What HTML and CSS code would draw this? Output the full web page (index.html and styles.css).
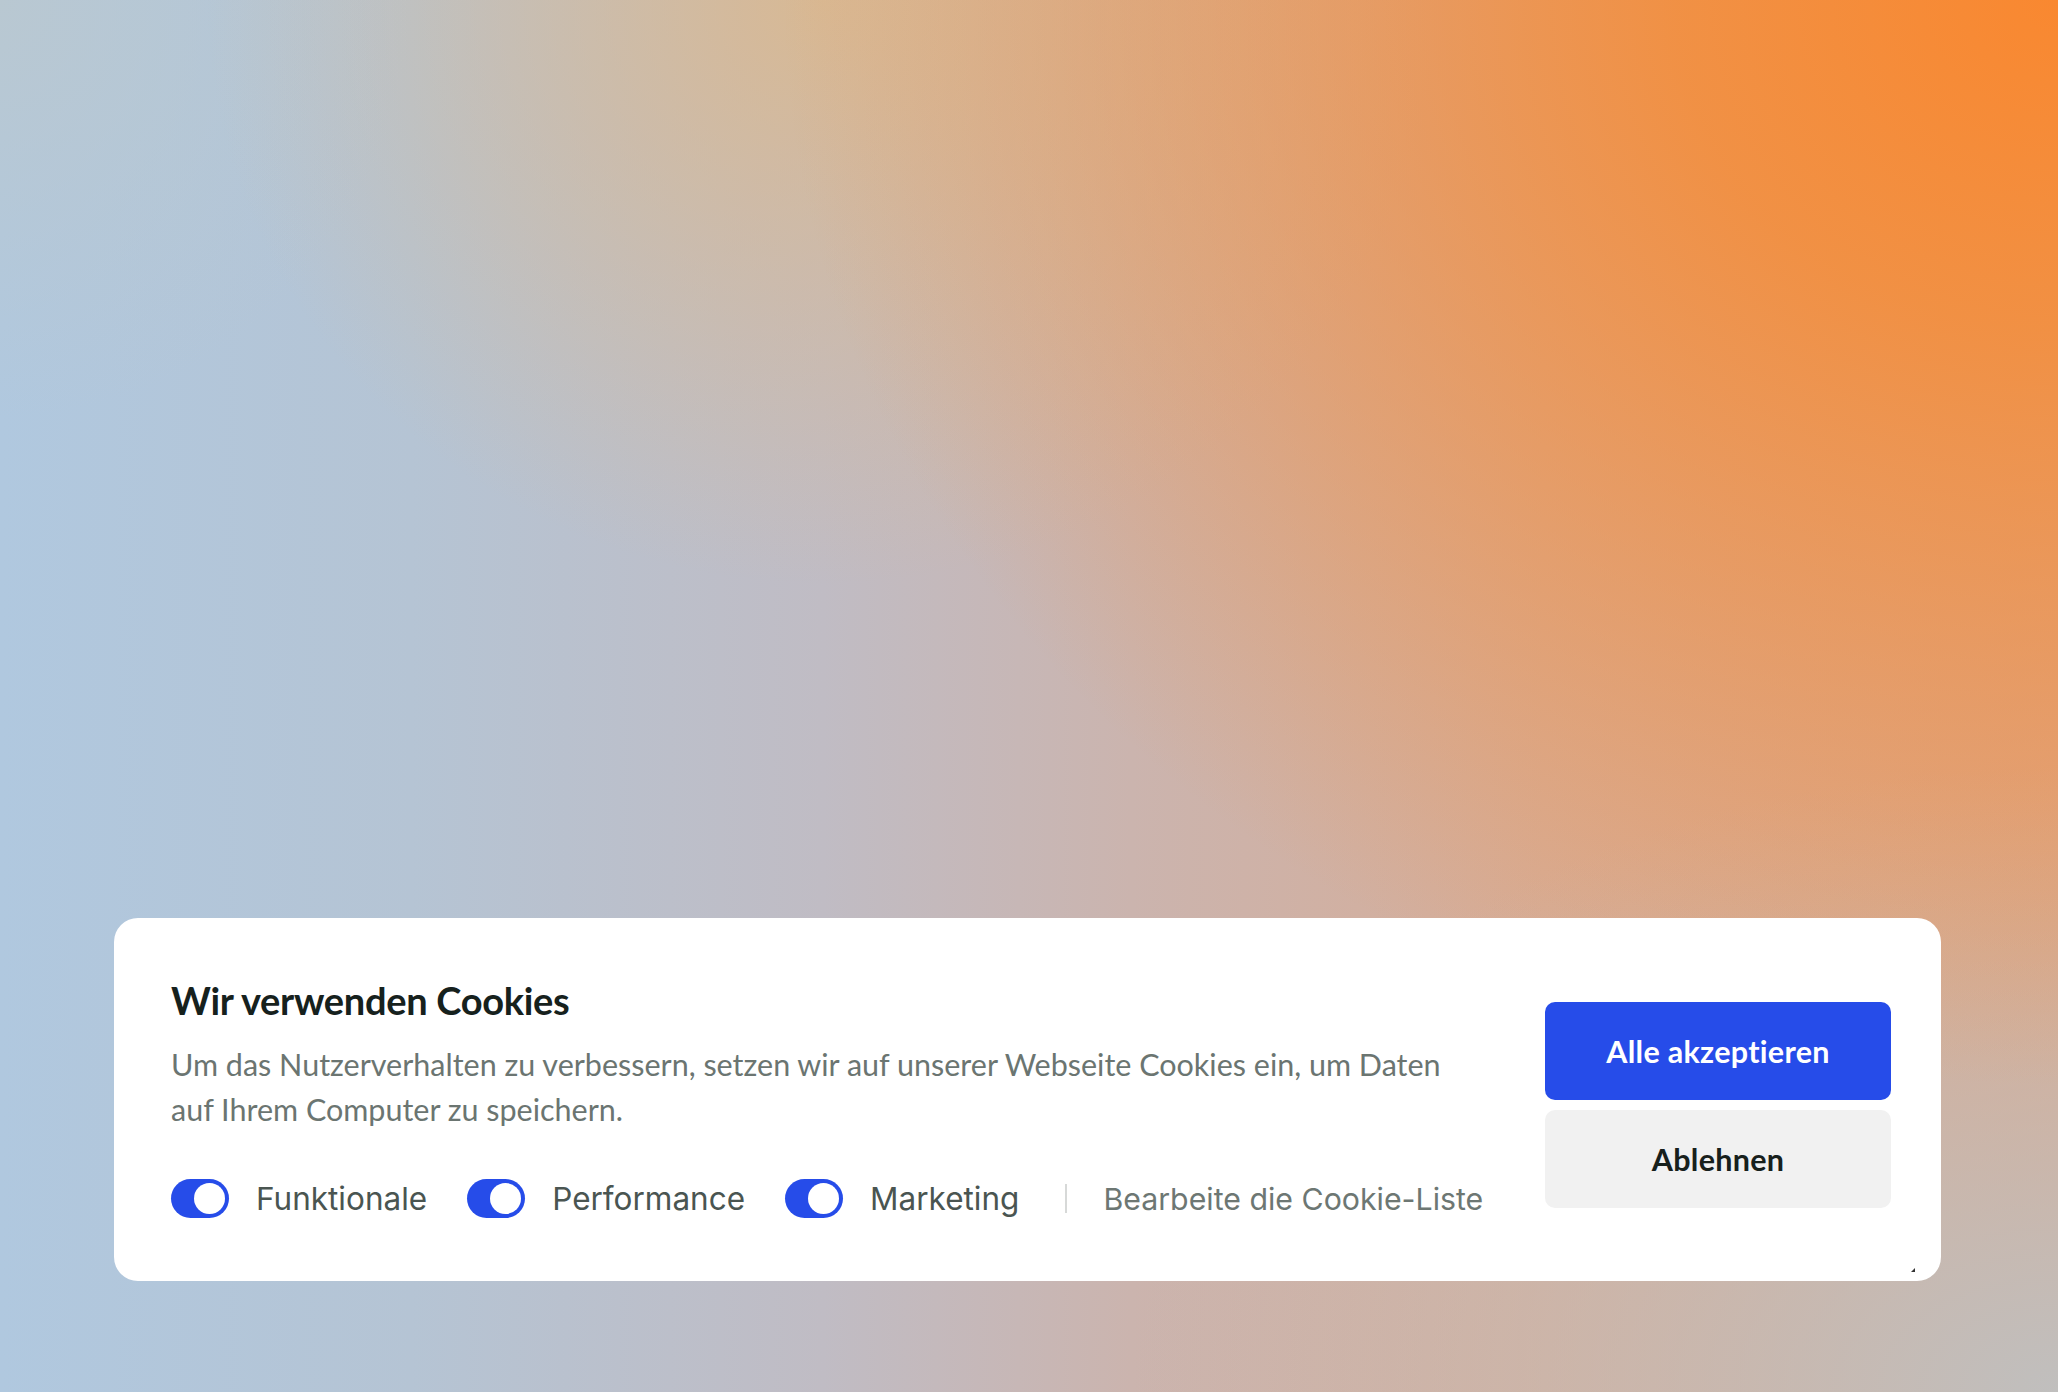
FILE: index.html
```html
<!DOCTYPE html>
<html lang="de">
<head>
<meta charset="utf-8">
<title>Cookies</title>
<link rel="stylesheet" href="styles.css">
</head>
<body>
<div class="page">
  <section class="card">
    <div class="content">
      <h1 class="title">Wir verwenden Cookies</h1>
      <p class="text">Um das Nutzerverhalten zu verbessern, setzen wir auf unserer Webseite Cookies ein, um Daten<br>auf Ihrem Computer zu speichern.</p>
      <div class="options">
        <label class="option"><span class="toggle"><span class="knob"></span></span><span class="label">Funktionale</span></label>
        <label class="option"><span class="toggle"><span class="knob"></span></span><span class="label">Performance</span></label>
        <label class="option"><span class="toggle"><span class="knob"></span></span><span class="label">Marketing</span></label>
        <span class="sep"></span>
        <a class="edit">Bearbeite die Cookie-Liste</a>
      </div>
    </div>
    <div class="actions">
      <button class="btn btn-primary">Alle akzeptieren</button>
      <button class="btn btn-secondary">Ablehnen</button>
    </div>
    <span class="corner"></span>
  </section>
</div>
</body>
</html>
```
FILE: styles.css
```css
* { box-sizing: border-box; }
html, body { margin: 0; padding: 0; height: 100%; }
body {
  font-family: "Lato", "Open Sans", sans-serif;
  background:
    radial-gradient(ellipse 62% 78% at 100% 0%, #f98830 0%, rgba(245,140,55,0.85) 30%, rgba(235,150,90,0) 100%),
    radial-gradient(ellipse 30% 42% at 40% 0%, rgba(222,184,136,0.8) 0%, rgba(222,184,136,0) 100%),
    radial-gradient(ellipse 45% 45% at 100% 100%, #c0bfbe 0%, rgba(192,191,190,0) 100%),
    radial-gradient(ellipse 20% 30% at 0% 0%, rgba(186,200,208,0.9) 0%, rgba(186,200,208,0) 100%),
    linear-gradient(90deg, #b0c8df 0%, #b5c4d4 20%, #c0bcc4 40%, #cbb4ae 55%, #d6ad98 75%, #dba78a 100%);
}
.page {
  min-height: 100vh;
  display: flex;
  align-items: flex-end;
  padding: 0 117px 111px 114px;
}
.card {
  position: relative;
  width: 100%;
  background: #fff;
  border-radius: 24px;
  display: flex;
  align-items: center;
  gap: 40px;
  padding: 59px 50px 63px 57px;
}
.content { flex: 1; min-width: 0; }
.title {
  margin: 0;
  font-size: 38px;
  font-weight: 700;
  color: #16211d;
  line-height: 46px;
  letter-spacing: -0.3px;
}
.text {
  margin: 19px 0 0;
  font-size: 30.5px;
  line-height: 45px;
  color: #6b7571;
}
.options {
  display: flex;
  align-items: center;
  height: 39px;
  margin-top: 47px;
  white-space: nowrap;
}
.option {
  display: flex;
  align-items: center;
  gap: 27px;
  margin-right: 40px;
}
.toggle {
  width: 58px;
  height: 39px;
  border-radius: 20px;
  background: #264ce9;
  display: flex;
  align-items: center;
  justify-content: flex-end;
  padding: 0 4px;
}
.knob {
  width: 31px;
  height: 31px;
  border-radius: 50%;
  background: #fff;
}
.label {
  font-family: "Inter", "Open Sans", sans-serif;
  font-size: 31.5px;
  color: #4a5551;
}
.sep {
  width: 2px;
  height: 29px;
  background: #d7d9d8;
  margin: 0 36px 0 6px;
}
.edit {
  font-family: "Inter", "Open Sans", sans-serif;
  font-size: 30.3px;
  color: #6d7773;
  white-space: nowrap;
}
.actions {
  width: 346px;
  flex-shrink: 0;
  margin-top: 14px;
  display: flex;
  flex-direction: column;
  gap: 10px;
}
.btn {
  height: 98px;
  border: 0;
  border-radius: 10px;
  font-family: "Lato", "Open Sans", sans-serif;
  font-size: 30.5px;
  font-weight: 700;
  letter-spacing: 0.3px;
}
.btn-primary { background: #264ce9; color: #fff; }
.btn-secondary { background: #f1f1f1; color: #17201c; }
.corner {
  position: absolute;
  right: 26px;
  bottom: 9px;
  width: 0;
  height: 0;
  border-left: 4px solid transparent;
  border-bottom: 4px solid #333;
}
```
